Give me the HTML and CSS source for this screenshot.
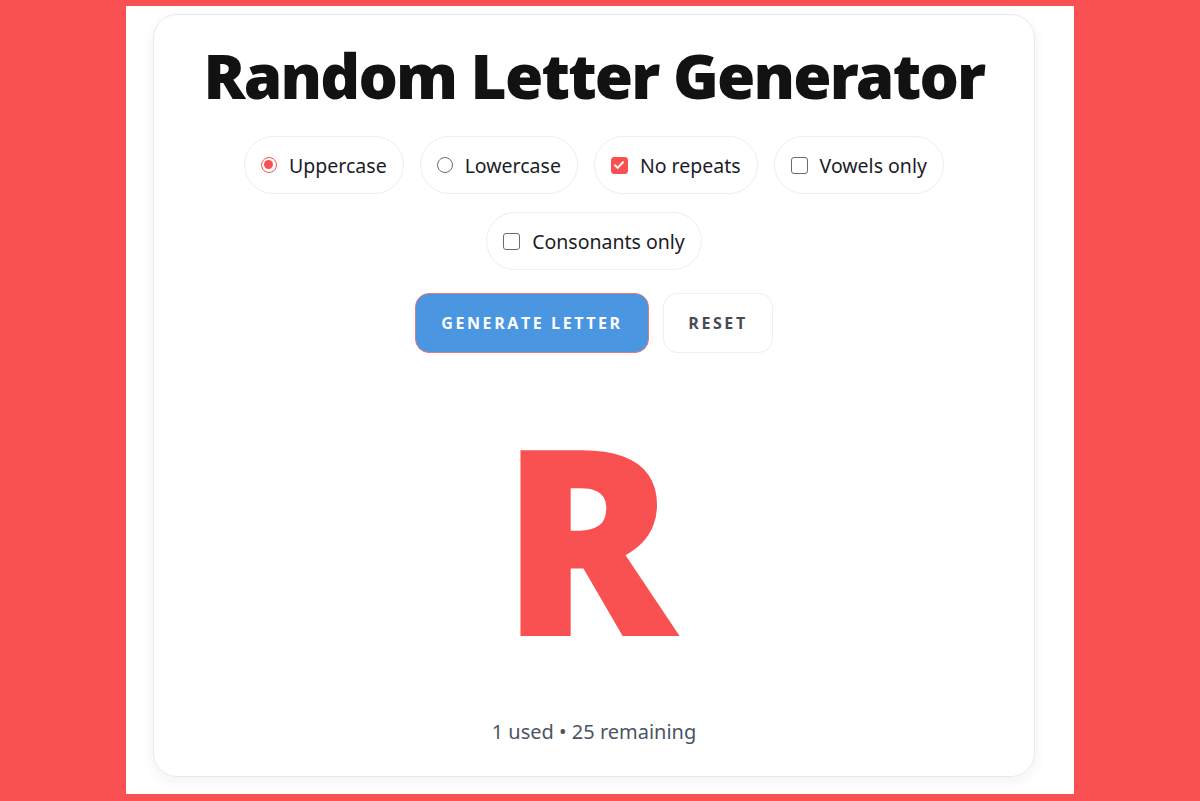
FILE: index.html
```html
<!DOCTYPE html>
<html>
<head>
<meta charset="utf-8">
<link rel="stylesheet" href="styles.css">
</head>
<body>
<div class="page">
  <div class="card">
    <h1 class="title">Random Letter Generator</h1>
    <div class="options">
      <label class="pill"><span class="radio on"></span><span>Uppercase</span></label>
      <label class="pill"><span class="radio"></span><span>Lowercase</span></label>
      <label class="pill"><span class="check on"><svg viewBox="0 0 16 16" width="16" height="16"><path d="M4 8.3l2.6 2.6L12 5.3" fill="none" stroke="#fff" stroke-width="2" stroke-linecap="round" stroke-linejoin="round"/></svg></span><span>No repeats</span></label>
      <label class="pill"><span class="check"></span><span>Vowels only</span></label>
      <label class="pill"><span class="check"></span><span>Consonants only</span></label>
    </div>
    <div class="actions">
      <button class="btn primary">GENERATE LETTER</button>
      <button class="btn secondary">RESET</button>
    </div>
    <div class="letter">R</div>
    <div class="status">1 used • 25 remaining</div>
  </div>
</div>
</body>
</html>
```
FILE: styles.css
```css
* { box-sizing: border-box; }
html, body { margin: 0; padding: 0; }
body {
  background: #f95152;
  font-family: "Noto Sans", "Open Sans", sans-serif;
  height: 801px;
  overflow: hidden;
}
.page {
  width: 948px;
  height: 788px;
  margin: 6px auto 0;
  background: #fff;
  padding: 8px 39px 0 27px;
}
.card {
  height: 763px;
  border: 1px solid #e6e9ef;
  border-radius: 24px;
  box-shadow: 0 4px 14px rgba(20, 30, 60, 0.06);
  display: flex;
  flex-direction: column;
  align-items: center;
  padding: 0 20px;
}
.title {
  margin: 29px 0 0;
  font-size: 62px;
  line-height: 1;
  font-weight: 900;
  color: #121212;
  letter-spacing: -1.8px;
  white-space: nowrap;
}
.options {
  margin-top: 30px;
  display: flex;
  flex-wrap: wrap;
  justify-content: center;
  gap: 18px 16px;
  width: 720px;
}
.pill {
  height: 58px;
  display: flex;
  align-items: center;
  gap: 12px;
  padding: 0 16px;
  border: 1px solid #eceef3;
  border-radius: 29px;
  font-size: 19.5px;
  color: #1c1c28;
}
.radio {
  width: 16px; height: 16px;
  border-radius: 50%;
  border: 1.5px solid #6b6b74;
  display: inline-block;
  position: relative;
}
.radio.on { border-color: #f95152; }
.radio.on::after {
  content: "";
  position: absolute;
  left: 2px; top: 2px;
  width: 9px; height: 9px;
  border-radius: 50%;
  background: #f95152;
}
.check {
  width: 17px; height: 17px;
  border-radius: 3px;
  border: 1.5px solid #6b6b74;
  display: inline-flex;
}
.check.on { background: #f95152; border-color: #f95152; }
.check svg { margin: -1px; }
.actions {
  margin-top: 23px;
  display: flex;
  gap: 14px;
}
.btn {
  height: 60px;
  border-radius: 14px;
  font-family: "Open Sans", "Noto Sans", sans-serif;
  font-weight: 700;
  font-size: 16px;
  letter-spacing: 2.6px;
  cursor: pointer;
}
.primary {
  width: 234px;
  background: #4a96e0;
  color: #fff;
  border: 1px solid #e9787a;
}
.secondary {
  width: 110px;
  background: #fff;
  color: #4a4a55;
  border: 1px solid #eceef3;
}
.letter {
  margin-top: 52px;
  margin-right: 11px;
  font-size: 260px;
  font-weight: 900;
  line-height: 1;
  color: #f95152;
  height: 240px;
}
.status {
  margin-top: auto;
  margin-bottom: 31px;
  font-size: 20px;
  color: #4b5563;
}
```
